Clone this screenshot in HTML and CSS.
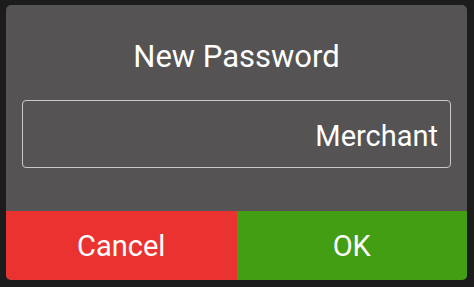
FILE: index.html
```html
<!DOCTYPE html>
<html lang="en">
<head>
    <meta charset="UTF-8">
    <meta name="viewport" content="width=device-width, initial-scale=1.0">
    <title>New Password</title>
    <link rel="stylesheet" href="styles.css">
</head>
<body>
    <div class="dialog">
        <h2 class="dialog-title">New Password</h2>
        <div class="field">
            <input type="text" id="password" value="Merchant">
        </div>
        <div class="actions">
            <button class="btn cancel">Cancel</button>
            <button class="btn ok">OK</button>
        </div>
    </div>
</body>
</html>
```

FILE: styles.css
```css
body {
    background-color: #1c1c1c;
    font-family: Roboto, "Liberation Sans", sans-serif;
    margin: 0;
    padding: 5px 7px 7px 6px;
    height: 287px;
    box-sizing: border-box;
    overflow: hidden;
}

.dialog {
    background-color: #555354;
    border-radius: 5px;
    height: 275px;
    display: flex;
    flex-direction: column;
    overflow: hidden;
    padding-top: 36px;
    box-sizing: border-box;
}

.dialog-title {
    margin: 0 0 28px 0;
    font-size: 31px;
    line-height: 31px;
    font-weight: normal;
    color: #fff;
    text-align: center;
}

.field {
    margin: 0 16px;
}

.field input {
    display: block;
    width: 100%;
    height: 68px;
    box-sizing: border-box;
    border: 1px solid #c9c9c9;
    border-radius: 4px;
    background: transparent;
    color: #fff;
    font-family: inherit;
    font-size: 29px;
    text-align: right;
    padding: 3px 12px 0 12px;
    outline: none;
}

.actions {
    display: flex;
    margin-top: auto;
    height: 69px;
}

.btn {
    flex: 1;
    border: none;
    color: #fff;
    font-family: inherit;
    font-size: 29px;
    padding: 0;
    cursor: pointer;
}

.cancel {
    background-color: #ea3330;
}

.ok {
    background-color: #439e14;
}
```
